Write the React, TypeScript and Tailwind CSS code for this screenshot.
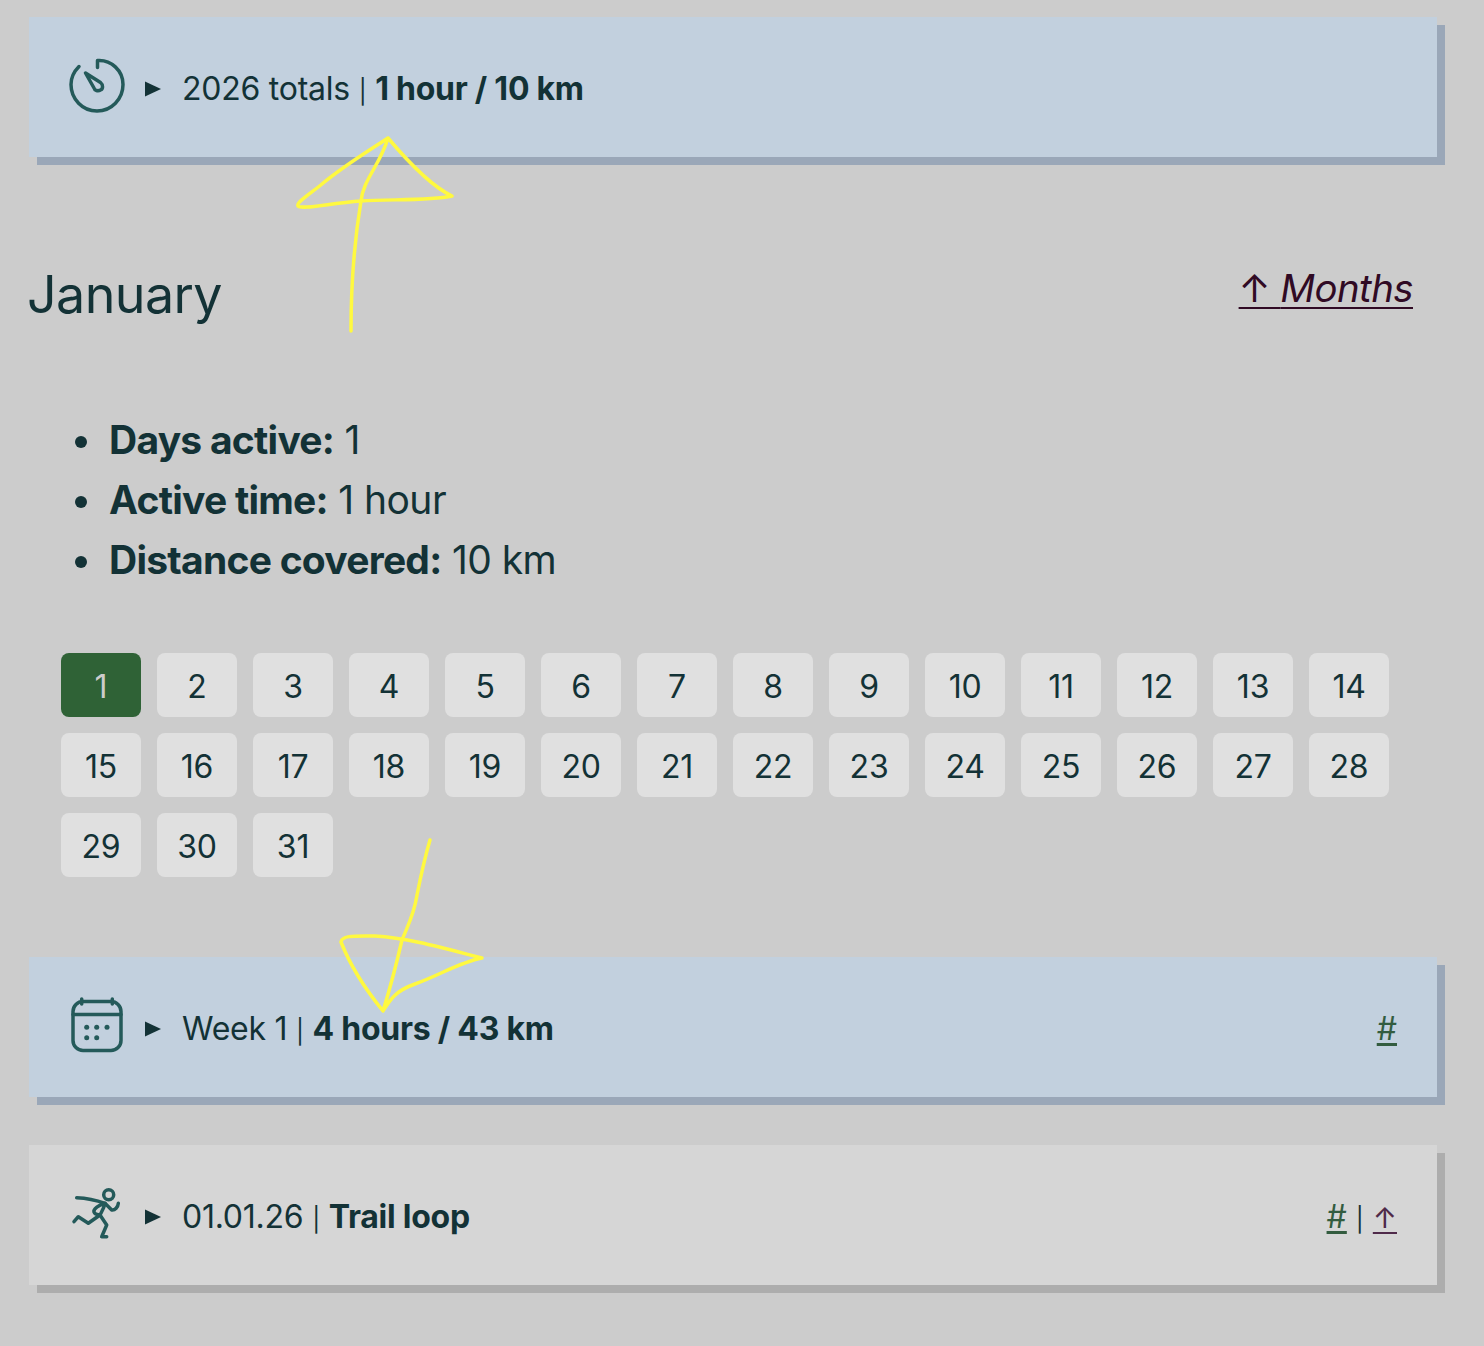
const DAYS = Array.from({ length: 31 }, (_, i) => i + 1);

function StopwatchIcon() {
  return (
    <svg width="56" height="56" viewBox="0 0 56 56" fill="none" stroke="#245a5a" strokeWidth="3.500" strokeLinecap="round" strokeLinejoin="round" className="overflow-visible">
      <path d="M28.500 8.500V1.500C42 0.500 54 11.500 54 25.500C54 40 42.500 52 28 52C13.500 52 2 40 2 25.500C2 18 5.500 12 10 7.500" />
      <path d="M16.500 14L31.500 23.500C34.500 26 34 30 31.500 31C29 32.500 25.500 31.500 25 29Z" />
    </svg>
  );
}

function CalendarIcon() {
  return (
    <svg width="56" height="56" viewBox="0 0 56 56" fill="none" stroke="#245a5a" strokeWidth="3.500" strokeLinecap="round" className="overflow-visible">
      <rect x="4" y="2.500" width="48" height="49" rx="10" />
      <path d="M4 15.500H52M12.700 0V5M43.300 0V5" />
      <g fill="#245a5a" stroke="none">
        <circle cx="17.700" cy="28.300" r="2.500" />
        <circle cx="27.700" cy="28.300" r="2.500" />
        <circle cx="38" cy="28.300" r="2.500" />
        <circle cx="17.700" cy="38.700" r="2.500" />
        <circle cx="27.700" cy="38.700" r="2.500" />
      </g>
    </svg>
  );
}

function RunnerIcon() {
  return (
    <svg width="56" height="56" viewBox="0 0 56 56" fill="none" stroke="#245a5a" strokeWidth="3.500" strokeLinecap="round" strokeLinejoin="round" className="overflow-visible">
      <circle cx="39.700" cy="7.700" r="5" />
      <path d="M7.700 10.700C15 11 24 12 36 16.300L42.700 23C46 23.500 49 20 49.300 16.300" />
      <path d="M36 16.300C30 18 24 22 25 25C26 28 29 27.500 31 28C33 24 35 21 36 16.300" />
      <path d="M31 28L19.300 36.300L9.300 29.700L5 34.700" />
      <path d="M31 28L37.700 38L32.700 49.700H37.700" />
    </svg>
  );
}

function Marker() {
  return (
    <svg width="16" height="16" viewBox="0 0 16 16" className="mt-1 mr-[21px] ml-5 shrink-0">
      <path d="M0 0.500L16 8L0 15.500Z" fill="#133236" />
    </svg>
  );
}

function Pipe() {
  return <span className="text-[24px]">|</span>;
}

function Panel({ icon, tone, children, right }: { icon: React.ReactNode; tone: "blue" | "gray"; children: React.ReactNode; right?: React.ReactNode }) {
  return (
    <div
      className={
        tone === "blue"
          ? "flex h-[140px] items-center bg-[#c2d0de] px-10 shadow-[8px_8px_0_0_#9aa7b8]"
          : "flex h-[140px] items-center bg-[#d6d6d6] px-10 shadow-[8px_8px_0_0_#adadad]"
      }
    >
      {icon}
      <Marker />
      <div className="flex-1 pt-1 tracking-[-0.25px]">{children}</div>
      {right}
    </div>
  );
}

function Stat({ label, value }: { label: string; value: string }) {
  return (
    <li className="flex items-center gap-[22px]">
      <span className="mt-[3px] h-3 w-3 rounded-full bg-[#133236]" />
      <span>
        <strong className="font-bold tracking-[-0.75px]">{label}</strong> {value}
      </span>
    </li>
  );
}

export default function App() {
  return (
    <div className="relative min-h-[1346px] bg-[#cccccc] pt-[17px] pr-[47px] pb-[61px] pl-[29px] font-['Inter',sans-serif] text-[32px] text-[#133236]">
      <Panel icon={<StopwatchIcon />} tone="blue">
        2026 totals <Pipe /> <strong className="font-bold">1 hour / 10 km</strong>
      </Panel>

      <div className="mt-[98px] flex items-center justify-between pr-6">
        <h1 className="-ml-0.5 text-[52px] leading-[80px] tracking-[-0.6px]">January</h1>
        <a className="mb-3.5 text-[38.4px] leading-[60px] tracking-[-0.55px] text-[#300a24] underline decoration-2 underline-offset-[5px]">
          ↑ <em>Months</em>
        </a>
      </div>

      <ul className="mt-[75px] pl-[46px] text-[39px] leading-[60px] tracking-[-0.55px]">
        <Stat label="Days active:" value="1" />
        <Stat label="Active time:" value="1 hour" />
        <Stat label="Distance covered:" value="10 km" />
      </ul>

      <div className="mt-[63px] ml-8 grid grid-cols-[repeat(14,80px)] gap-4 tracking-[-0.25px]">
        {DAYS.map(day => (
          <div
            key={day}
            className={
              day === 1
                ? "flex h-16 items-center justify-center rounded-lg bg-[#2f6236] pt-1 text-[#cccccc]"
                : "flex h-16 items-center justify-center rounded-lg bg-[#e0e0e0] pt-1"
            }
          >
            {day}
          </div>
        ))}
      </div>

      <div className="mt-20">
        <Panel
          icon={<CalendarIcon />}
          tone="blue"
          right={<a className="pt-1 text-[#335c3f] underline underline-offset-[3px]">#</a>}
        >
          Week 1 <Pipe /> <strong className="font-bold">4 hours / 43 km</strong>
        </Panel>
      </div>

      <div className="mt-12">
        <Panel
          icon={<RunnerIcon />}
          tone="gray"
          right={
            <div className="pt-1">
              <a className="text-[#335c3f] underline underline-offset-[3px]">#</a> <Pipe />{" "}
              <a className="text-[29px] text-[#4f2a4a] underline underline-offset-[4px]">↑</a>
            </div>
          }
        >
          01.01.26 <Pipe /> <strong className="font-bold">Trail loop</strong>
        </Panel>
      </div>

      {/* hand-drawn marks on top of the page */}
      <svg width="1484" height="1346" viewBox="0 0 1484 1346" fill="none" stroke="#fff93f" strokeWidth="3.500" strokeLinecap="round" strokeLinejoin="round" className="pointer-events-none absolute top-0 left-0">
        <path d="M351 331C351 290 354 243 361 201C363 180 380 165 388 138C370 150 345 165 322 184C310 194 296 202 298 206C302 210 330 203 361 201C390 199 430 201 452 196C435 188 415 170 388 138" />
        <path d="M430 840C424 860 420 880 417 895C414 915 408 925 402 940C395 970 388 995 383 1011C370 995 352 970 341 942C342 935 355 936 375 936C410 938 450 950 482 958C460 962 440 975 415 984C395 991 390 1000 383 1011" />
      </svg>
    </div>
  );
}
